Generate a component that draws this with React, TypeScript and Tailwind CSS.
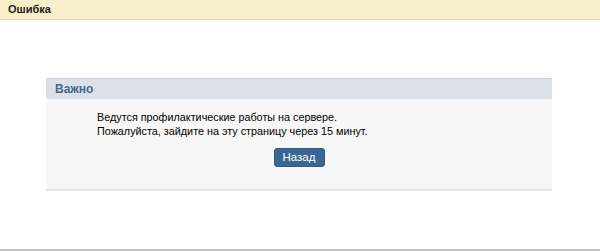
import React from "react";

export default function App() {
  return (
    <div className="w-[600px] h-[251px] bg-white flex flex-col" style={{ fontFamily: '"Liberation Sans", Arial, sans-serif' }}>
      <div className="h-[20px] bg-[#f6efc9] border-b border-[#e4dbb0] flex items-center pl-[8px]">
        <span className="text-[11px] font-bold text-[#222]">Ошибка</span>
      </div>
      <div className="flex-1 flex flex-col pt-[58px]">
        <div className="ml-[46px] w-[506px] flex flex-col">
          <div className="h-[21px] bg-[#dae1e8] border-t border-[#c9d2dc] flex items-center pl-[9px]">
            <span className="text-[12px] font-bold text-[#45688e]">Важно</span>
          </div>
          <div className="bg-[#f7f7f7] h-[92px] border-b-2 border-[#e6e6e6] flex flex-col pt-[11px]">
            <div className="pl-[51px] text-[10.8px] leading-[14px] text-[#000]">
              <div>Ведутся профилактические работы на сервере.</div>
              <div>Пожалуйста, зайдите на эту страницу через 15 минут.</div>
            </div>
            <div className="flex justify-center mt-[10px]">
              <div className="w-[51px] h-[19px] bg-[#3a6694] rounded-[3px] border border-[#2f5a86] flex items-center justify-center text-white text-[11.5px]">
                Назад
              </div>
            </div>
          </div>
        </div>
      </div>
      <div className="h-[2px] bg-[#c4c4c4]"></div>
    </div>
  );
}
